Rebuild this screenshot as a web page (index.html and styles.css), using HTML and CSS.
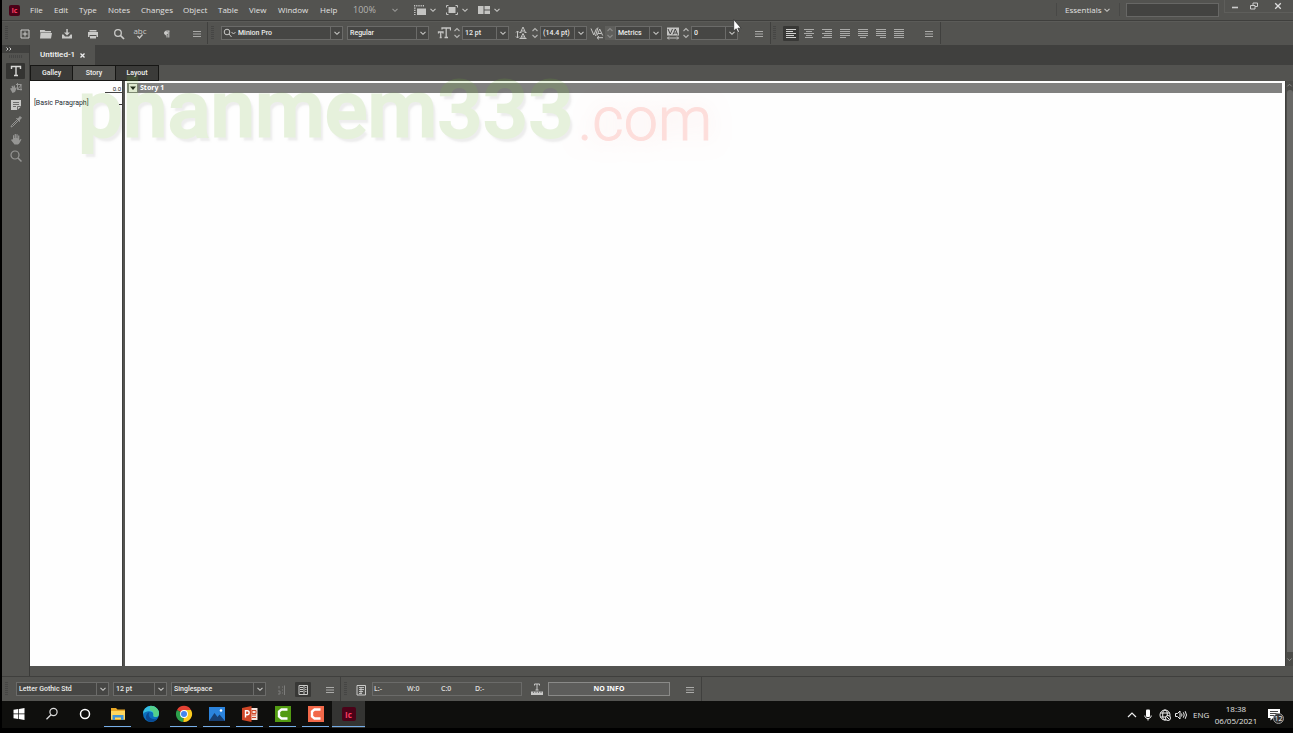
FILE: index.html
```html
<!DOCTYPE html>
<html lang="en">
<head>
<meta charset="utf-8">
<title>Untitled-1 - InCopy</title>
<link rel="stylesheet" href="styles.css">
</head>
<body>
<svg class="defs" width="0" height="0" aria-hidden="true">
  <symbol id="chev" viewBox="0 0 8 8"><path d="M1.5 2.8 4 5.3 6.500 2.800" fill="none" stroke="currentColor" stroke-width="1.1"/></symbol>
  <symbol id="burger" viewBox="0 0 16 16"><path d="M4 5.500h8M4 8h8M4 10.500h8" stroke="currentColor" stroke-width="1.1"/></symbol>
  <symbol id="spin" viewBox="0 0 10 14"><path d="M2.500 5 5 2.500 7.500 5M2.500 9 5 11.500 7.500 9" fill="none" stroke="currentColor" stroke-width="1.1"/></symbol>
  <symbol id="lens" viewBox="0 0 16 16"><circle cx="7" cy="7" r="3.300" fill="none" stroke="currentColor" stroke-width="1.300"/><path d="m9.500 9.500 3.500 3.500" stroke="currentColor" stroke-width="1.700"/></symbol>
</svg>
<div class="app">
  <header class="menubar">
    <span class="applogo">Ic</span>
    <nav class="menus">
      <button>File</button><button>Edit</button><button>Type</button><button>Notes</button><button>Changes</button><button>Object</button><button>Table</button><button>View</button><button>Window</button><button>Help</button>
    </nav>
    <label class="zoom"><select aria-label="Zoom level"><option>100%</option></select><svg class="chev"><use href="#chev"/></svg></label>
    <div class="viewopts">
      <button aria-label="View options"><svg width="12" height="10" viewBox="0 0 12 10"><path d="M3 3.500h9V10H3z" fill="#c4c4c2"/><path d="M0 .8h11M.8 2.500v7.500" stroke="#c4c4c2" stroke-width="1.500" stroke-dasharray="1.200 1"/></svg><svg class="chev"><use href="#chev"/></svg></button>
      <button aria-label="Screen mode"><svg width="12" height="10" viewBox="0 0 12 10"><path d="M2.500 2h7v6h-7z" fill="#c4c4c2"/><path d="M.5 2.500v-2h2M9.500.5h2v2M.5 7.500v2h2M9.500 9.500h2v-2" fill="none" stroke="#c4c4c2"/></svg><svg class="chev"><use href="#chev"/></svg></button>
      <button aria-label="Arrange documents"><svg width="12" height="10" viewBox="0 0 12 10"><path d="M0 1h5.500v8H0zM6.500 1H12v3.500H6.500zM6.500 5.500H12V9H6.500z" fill="#c4c4c2"/></svg><svg class="chev"><use href="#chev"/></svg></button>
    </div>
    <div class="workspace">
      <label class="essentials"><select aria-label="Workspace"><option>Essentials</option></select><svg class="chev"><use href="#chev"/></svg></label>
      <input class="search" type="text" aria-label="Search">
    </div>
    <div class="winbtns">
      <button aria-label="Minimize"><svg width="8" height="8" viewBox="0 0 8 8"><path d="M1 5.500h6" stroke="#ccc" stroke-width="1.600"/></svg></button>
      <button aria-label="Restore"><svg width="8" height="8" viewBox="0 0 8 8"><path d="M3 4V1h4.500v3.500H5M.5 3.500H5v3.500H.5z" fill="none" stroke="#ccc"/></svg></button>
      <button aria-label="Close"><svg width="8" height="8" viewBox="0 0 8 8"><path d="m1.200 1.200 5.600 5.600m0-5.600L1.200 6.800" stroke="#ddd" stroke-width="1.300"/></svg></button>
    </div>
  </header>

  <div class="toolbar">
    <div class="group files">
      <i class="grip"></i>
      <button aria-label="New"><svg><path d="M4 4h8v8H4zM8 5.500v5M5.500 8h5" fill="none" stroke="currentColor"/></svg></button>
      <button aria-label="Open"><svg><path d="M2 4h4.500l1 1H13v1.500H2zM2.500 7H14l-1 5.500H2z" fill="currentColor"/></svg></button>
      <button aria-label="Save"><svg><path d="M7.300 3h1.500v3.500H11L8 9.500 5 6.500h2.300zM3 8.500h1.500l1.500 2h4l1.500-2H13v4H3z" fill="currentColor"/></svg></button>
      <button aria-label="Print"><svg><path d="M4.500 4h7v1.500h-7zM3 6h10v5h-1.500V9h-7v2H3zM5 10h6v2.500H5z" fill="currentColor"/></svg></button>
      <button aria-label="Find"><svg><use href="#lens"/></svg></button>
      <button class="spell" aria-label="Check spelling"><span>abc</span><svg width="8" height="5" viewBox="0 0 8 5"><path d="m1.500 2 2 2L6.500.5" fill="none" stroke="currentColor" stroke-width="1.300"/></svg></button>
      <button aria-label="Hidden characters"><svg><path d="M10.500 5H7.500a2 2 0 0 0 0 4H8v2.500M9.800 5v6.500" fill="none" stroke="currentColor"/><circle cx="7.300" cy="7" r="1.800" fill="currentColor"/></svg></button>
      <button class="dim" aria-label="Panel menu"><svg><use href="#burger"/></svg></button>
    </div>
    <div class="group type">
      <i class="grip"></i>
      <label class="combo withlens"><select aria-label="Font family"><option>Minion Pro</option></select><svg class="lead" width="14" height="10" viewBox="0 0 14 10"><circle cx="4" cy="4" r="2.800" fill="none" stroke="currentColor"/><path d="m6 6 2.500 3M8.500 4l2 2 2-2" fill="none" stroke="currentColor"/></svg><span class="drop"><svg class="chev"><use href="#chev"/></svg></span></label>
      <label class="combo"><select aria-label="Font style"><option>Regular</option></select><span class="drop"><svg class="chev"><use href="#chev"/></svg></span></label>
      <div class="field">
        <svg class="fi" viewBox="0 0 14 14"><path d="M5 3.500V2h8.500v2.500M9.200 2v9.500M7.500 11.500H11M1.500 7.500V6h4.500v1.500M3.700 6v5.500M2.700 11.500h2" fill="none" stroke="currentColor" stroke-width="1.300"/></svg>
        <button class="spin" aria-label="Step size"><svg><use href="#spin"/></svg></button>
        <label class="combo"><select aria-label="Font size"><option>12 pt</option></select><span class="drop"><svg class="chev"><use href="#chev"/></svg></span></label>
      </div>
      <div class="field">
        <svg class="fi" viewBox="0 0 14 14"><path d="M2.500 5v7M1 6.500 2.500 5 4 6.500M1 10.500 2.500 12 4 10.500M5.500 6.500 8 1l2.500 5.500M6.200 5h3.500M4.500 6.500h2M9.500 6.500h2M5.500 12.500 8 7.500l2.500 5M6.200 11h3.500M4.500 12.500h7" fill="none" stroke="currentColor"/></svg>
        <button class="spin" aria-label="Step leading"><svg><use href="#spin"/></svg></button>
        <label class="combo"><select aria-label="Leading"><option>(14.4 pt)</option></select><span class="drop"><svg class="chev"><use href="#chev"/></svg></span></label>
      </div>
      <div class="field">
        <svg class="fi" viewBox="0 0 14 14"><path d="m1 2.500 2.800 6.500L6.500 2.500M7 9.500 9.700 3l3 6.500M8 7.500h3.500M8 1.500 5.500 10M13 11.700H7m2-1.700-2 1.700 2 1.700" fill="none" stroke="currentColor"/></svg>
        <button class="spin off" aria-label="Step kerning"><svg><use href="#spin"/></svg></button>
        <label class="combo"><select aria-label="Kerning"><option>Metrics</option></select><span class="drop"><svg class="chev"><use href="#chev"/></svg></span></label>
      </div>
      <div class="field">
        <svg class="fi" viewBox="0 0 14 14"><path d="M1 1.500h12v8H1z" fill="currentColor"/><path d="M2 3 4.300 8 6.500 3M7 8.500 9.300 3l2.300 5.500M8 7h2.800" fill="none" stroke="#444"/><path d="M1.500 12h11M3 10.500 1.500 12 3 13.500M11 10.500l1.500 1.500-1.500 1.500" fill="none" stroke="currentColor"/></svg>
        <button class="spin" aria-label="Step tracking"><svg><use href="#spin"/></svg></button>
        <label class="combo"><select aria-label="Tracking"><option>0</option></select><span class="drop"><svg class="chev"><use href="#chev"/></svg></span></label>
      </div>
      <button class="dim" aria-label="Panel menu"><svg><use href="#burger"/></svg></button>
    </div>
    <div class="group aligns">
      <i class="grip"></i>
      <button class="on" aria-label="Align left"><svg><path d="M3 3.500h10M3 5.500h7M3 7.500h10M3 9.500h8M3 11.500h10" stroke="currentColor"/></svg></button>
      <button aria-label="Align center"><svg><path d="M3 3.500h10M5 5.500h6M3 7.500h10M5 9.500h6M4 11.500h8" stroke="currentColor"/></svg></button>
      <button aria-label="Align right"><svg><path d="M3 3.500h10M6 5.500h7M3 7.500h10M5 9.500h8M3 11.500h10" stroke="currentColor"/></svg></button>
      <button aria-label="Justify last left"><svg><path d="M3 3.500h10M3 5.500h10M3 7.500h10M3 9.500h10M3 11.500h6" stroke="currentColor"/></svg></button>
      <button aria-label="Justify last center"><svg><path d="M3 3.500h10M3 5.500h10M3 7.500h10M3 9.500h10M5 11.500h6" stroke="currentColor"/></svg></button>
      <button aria-label="Justify last right"><svg><path d="M3 3.500h10M3 5.500h10M3 7.500h10M3 9.500h10M7 11.500h6" stroke="currentColor"/></svg></button>
      <button aria-label="Justify all"><svg><path d="M3 3.500h10M3 5.500h10M3 7.500h10M3 9.500h10M3 11.500h10" stroke="currentColor"/></svg></button>
      <button class="dim" aria-label="Panel menu"><svg><use href="#burger"/></svg></button>
    </div>
  </div>

  <main class="work">
    <aside class="dock">
      <button class="expand" aria-label="Expand panel"><svg width="6" height="4" viewBox="0 0 6 4"><path d="m.5.5 1.500 1.500L.5 3.500M3.500.5 5 2 3.500 3.500" fill="none" stroke="#ccc"/></svg></button>
      <i class="hgrip"></i>
      <div class="tools">
        <button class="on" aria-label="Type tool"><svg><path d="M3.500 6V3.500h9V6M8 3.500v9M6 12.500h4" fill="none" stroke="#d8d8d6" stroke-width="1.400"/></svg></button>
        <button aria-label="Position tool"><svg><path d="M2 8.500 4 8l-.5-2 1.300-.2.700 1.700.2-2h1.300v2.500l1.500-1v1.500L7 12l-2.500 1z" fill="currentColor"/><path d="M9.500 3v6.500H14M8 4.500h5v6M9.500 9.500l4-5" fill="none" stroke="currentColor"/></svg></button>
        <button class="bright" aria-label="Note tool"><svg><path d="M3 3h10v6.500L9.500 13H3z" fill="currentColor"/><path d="M5 5.500h6M5 7.500h6M5 9.500h3M9.500 13V9.500H13" fill="none" stroke="#555" stroke-width=".8"/></svg></button>
        <button aria-label="Eyedropper tool"><svg><path d="m9.500 5.500-6 6L3 13l1.500-.5 6-6" fill="none" stroke="currentColor"/><path d="M8.500 4.500 10 5l2-2.500 1.500 1.500L11.200 6l.3 1.500z" fill="currentColor" stroke="currentColor"/></svg></button>
        <button aria-label="Hand tool"><svg><path d="M5 8.500V4.200h1.200V7h.5V3h1.200v4h.5V3.200h1.200V7.300h.5V4.500h1.200V9.500l1.200-1.500 1 .5-2.300 4-1.200 1H6.500L3 9l1-.8z" fill="currentColor"/></svg></button>
        <button aria-label="Zoom tool"><svg><circle cx="7" cy="7" r="4" fill="none" stroke="currentColor" stroke-width="1.200"/><path d="m10 10 3.500 3.500" stroke="currentColor" stroke-width="1.500"/></svg></button>
      </div>
    </aside>
    <section class="document">
      <div class="doctabs"><div class="doctab"><span>Untitled-1</span><button aria-label="Close document"><svg width="5" height="5" viewBox="0 0 5 5"><path d="m.5.5 4 4m0-4-4 4" stroke="#eee" stroke-width="1.300"/></svg></button></div></div>
      <div class="viewtabs"><button>Galley</button><button class="cur">Story</button><button>Layout</button></div>
      <div class="editor">
        <div class="styles">
          <div class="ruler"><span>0.0</span></div>
          <div class="para"><span>[Basic Paragraph]</span><i></i></div>
        </div>
        <div class="story">
          <div class="storyhead"><button aria-label="Collapse story"><svg width="8" height="8" viewBox="0 0 8 8"><path d="M1 2.500h6L4 6z" fill="#111"/></svg></button><span>Story 1</span></div>
        </div>
        <div class="scroll">
          <svg class="up" viewBox="0 0 8 8"><path d="M1.500 5 4 2.500 6.500 5" fill="none" stroke="#8c8c8a"/></svg>
          <i></i>
          <svg viewBox="0 0 8 8"><use href="#chev"/></svg>
        </div>
      </div>
      <div class="hbar"></div>
    </section>
  </main>

  <footer class="bottombar">
    <div class="group galley">
      <i class="grip"></i>
      <label class="combo"><select aria-label="Display font"><option>Letter Gothic Std</option></select><span class="drop"><svg class="chev"><use href="#chev"/></svg></span></label>
      <label class="combo"><select aria-label="Display size"><option>12 pt</option></select><span class="drop"><svg class="chev"><use href="#chev"/></svg></span></label>
      <label class="combo"><select aria-label="Line spacing"><option>Singlespace</option></select><span class="drop"><svg class="chev"><use href="#chev"/></svg></span></label>
      <button class="faint" aria-label="Line numbers"><svg><path d="M5 4v2.500M4 9h2v3H4M10.500 3.500V13M8 5h1M8 8h1M8 11h1" fill="none" stroke="currentColor"/></svg></button>
      <button class="on" aria-label="Style column"><svg><path d="M4 3.500h8.500v9H4z" fill="none" stroke="currentColor"/><path d="M5 5.500h3M5 7.500h3M5 9.500h3M9 3.500v9" stroke="currentColor"/><path d="M10 5.500h1.500M10 7.500h1.500M10 9.500h1.500" stroke="currentColor" stroke-width=".8"/></svg></button>
      <button class="dim" aria-label="Panel menu"><svg><use href="#burger"/></svg></button>
    </div>
    <div class="group copyfit">
      <i class="grip"></i>
      <button aria-label="Update info"><svg><path d="M4 3.500h8.500v9.500H4z" fill="none" stroke="currentColor"/><path d="M6 5.500h5M6 7.500h5M6 9.500h4M6 11.500h3M8 5v6" stroke="currentColor" stroke-width=".9"/></svg></button>
      <div class="counts"><span>L:-</span><span>W:0</span><span>C:0</span><span>D:-</span></div>
      <svg class="fitico" viewBox="0 0 16 16"><path d="M5.500 4.500v-1.500h5v1.500M8 3v6M6.500 9h3" fill="none" stroke="currentColor"/><path d="M2 10.500h12V14H2z" fill="currentColor"/><path d="M4.500 10.500V12M7 10.500V12M9.500 10.500V12M12 10.500V12" stroke="#555" stroke-width=".7"/></svg>
      <div class="noinfo">NO INFO</div>
      <button class="dim" aria-label="Panel menu"><svg><use href="#burger"/></svg></button>
    </div>
  </footer>

  <div class="taskbar">
    <div class="apps">
      <button aria-label="Start"><svg viewBox="0 0 20 20"><path d="M4.500 5.800 9.300 5v4.600H4.500zM10 4.900l5.500-.9v5.600H10zM4.500 10.300h4.800V15l-4.800-.8zM10 10.300h5.500V16l-5.500-.9z" fill="#fff"/></svg></button>
      <button aria-label="Search"><svg viewBox="0 0 20 20"><circle cx="11.500" cy="8" r="3.600" fill="none" stroke="#ddd" stroke-width="1.200"/><path d="M9 10.700 4.500 15.300" stroke="#ddd" stroke-width="1.300"/></svg></button>
      <button aria-label="Cortana"><svg viewBox="0 0 20 20"><circle cx="10" cy="10" r="4.500" fill="none" stroke="#fff" stroke-width="1.500"/></svg></button>
      <button class="run" aria-label="File Explorer"><svg viewBox="0 0 20 20"><path d="M3 4h5l1.500 1.500H17V16H3z" fill="#e9a825"/><path d="M3 7h14v8H3z" fill="#ffd75e"/><path d="M4.500 16v-5h11v5H13v-2.500H7V16z" fill="#3f95d8"/></svg></button>
      <button aria-label="Edge"><svg viewBox="0 0 20 20"><circle cx="10" cy="10" r="8" fill="#0c6fbd"/><path d="M2 10a8 8 0 0 1 16-.5c0 3-2.500 3.800-4.500 3.300-1.500-.4-1-1.300-1-2.600C12.500 7 5 5.500 2 10z" fill="#35bfe2"/><path d="M9 2.100c5-.6 9 3 9 7.400 0 3-2.500 3.800-4.500 3.300-1.500-.4-1-1.300-1-2.600 0-3-2-3.500-3.500-4z" fill="#55d08a"/><path d="M8.500 8c-2 3 0 7.500 6 7.200l2.500-1.500c-3 4.600-8 5-10.500 2.800C3.500 14 5 9.500 8.500 8z" fill="#0a4a94"/></svg></button>
      <button class="run" aria-label="Chrome"><svg viewBox="0 0 20 20"><path d="M10 10 3 6a8 8 0 0 1 14 0z" fill="#e34133"/><path d="M10 10 3 6a8 8 0 0 0 6.300 12z" fill="#2c9f4b"/><path d="M10 10 9.300 18A8 8 0 0 0 17 6h-7z" fill="#fccb1e"/><circle cx="10" cy="10" r="3.900" fill="#fff"/><circle cx="10" cy="10" r="3" fill="#4585ee"/></svg></button>
      <button class="run" aria-label="Photos"><svg viewBox="0 0 20 20"><path d="M2 3h16v14H2z" fill="#2b83dc"/><path d="m2 17 5.500-8 3 4 2-2.500L18 17z" fill="#173f73"/><circle cx="14" cy="6.500" r="1.300" fill="#fff"/></svg></button>
      <button class="run" aria-label="PowerPoint"><svg viewBox="0 0 20 20"><path d="M10 4h7.500v12H10z" fill="#f5e5df"/><path d="M12 6.500h4v3h-4zM12 11h4M12 13.500h4" fill="none" stroke="#d04727"/><path d="m2 4 9.500-2v16L2 16z" fill="#d04727"/><path d="M5.500 13.500V6.800h1.700a1.900 1.900 0 0 1 0 3.900H5.500" fill="none" stroke="#fff" stroke-width="1.400"/></svg></button>
      <button class="run" aria-label="Camtasia"><svg viewBox="0 0 20 20"><path d="M2 2h16v16H2z" fill="#529b12"/><path d="M14.500 5.500h-6L6 7.500v5l2.500 2h6" fill="none" stroke="#fff" stroke-width="2.400"/></svg></button>
      <button class="run" aria-label="Camtasia Recorder"><svg viewBox="0 0 20 20"><path d="M2 2h16v16H2z" fill="#f2694a"/><path d="M14.500 5.500h-6L6 7.500v5l2.500 2h6" fill="none" stroke="#fff" stroke-width="2.400"/></svg></button>
      <button class="run active" aria-label="InCopy"><span class="applogo">Ic</span></button>
    </div>
    <div class="tray">
      <button aria-label="Show hidden icons"><svg viewBox="0 0 16 16"><path d="m4 10 4-4 4 4" fill="none" stroke="#eee" stroke-width="1.200"/></svg></button>
      <button aria-label="Microphone"><svg viewBox="0 0 16 16"><rect x="6" y="2.500" width="4" height="7.500" rx="1" fill="#fff"/><path d="M4.800 8.500c0 4 6.400 4 6.400 0M8 11.500v2" fill="none" stroke="#fff"/></svg></button>
      <button aria-label="Network"><svg viewBox="0 0 16 16"><circle cx="8" cy="8" r="5" fill="none" stroke="#eee"/><ellipse cx="8" cy="8" rx="2.300" ry="5" fill="none" stroke="#eee"/><path d="M3.500 6h9M3.500 10h9" stroke="#eee"/><circle cx="11" cy="11" r="2.500" fill="#111" stroke="#eee"/><path d="m9.500 9.500 3 3" stroke="#eee"/></svg></button>
      <button aria-label="Volume"><svg viewBox="0 0 16 16"><path d="M2.500 6.500h2L7 4v8L4.500 9.500h-2zM8.500 6.500q1 1.500 0 3M10.300 5.300q1.900 2.700 0 5.400M12.200 4.200q2.600 3.800 0 7.600" fill="none" stroke="#eee"/></svg></button>
      <span class="lang">ENG</span>
      <div class="clock"><span>18:38</span><span>06/05/2021</span></div>
      <button class="notes" aria-label="Notifications"><svg viewBox="0 0 16 16"><path d="M2 2h12v9H7l-2.500 2.500V11H2z" fill="#fff"/><path d="M4 4.500h8M4 6.500h8M4 8.500h5" stroke="#333" stroke-width=".9"/></svg><span class="badge">12</span></button>
    </div>
  </div>
  <div class="edge"></div>

  <div class="watermark" aria-hidden="true"><span class="name">phanmem333</span><span class="com">.com</span></div>
  <svg class="cursor" viewBox="0 0 8 13"><path d="M.5.500v10.500l2.300-2 1.500 3.500 1.500-.7-1.500-3.300h3z" fill="#fff" stroke="#222" stroke-width=".6"/></svg>
</div>
</body>
</html>
```
FILE: styles.css
```css
* { box-sizing: border-box; }
html, body { margin: 0; height: 100%; background: #000; }
body { font-family: "Open Sans", "Noto Sans", sans-serif; font-size: 8px; line-height: 12px; color: #e2e2e0; }
button, select, input { font: inherit; color: inherit; margin: 0; padding: 0; border: 0; background: none; border-radius: 0; }
select { appearance: none; min-width: 0; outline: 0; }
svg { display: block; }
.defs { position: absolute; }
.chev { width: 8px; height: 8px; color: #c8c8c6; }

.app { position: relative; display: flex; flex-direction: column; height: 100vh; overflow: hidden; padding-left: 2px; }

.menubar { display: flex; height: 21px; background: #535350; border-bottom: 1px solid #3f3f3d; }
.applogo { display: grid; place-items: center; width: 11px; height: 11px; margin: 5px 10px 0 7px; border-radius: 2px; background: #4b0218; color: #fb3b62; font-size: 7px; line-height: 9px; font-weight: 700; }
.menus { display: grid; grid-template-columns: 24px 25px 29px 33px 42px 35px 31px 29px 42px 33px; }
.menus button { text-align: left; white-space: nowrap; }
.zoom { display: grid; grid-template-columns: 38px 8px; align-items: center; color: #b4b4b2; }
.zoom select { font-size: 9px; }
.zoom .chev { color: #9a9a98; }
.viewopts { display: grid; grid-template-columns: repeat(3, 32px); margin-left: 15px; }
.viewopts button { display: flex; align-items: center; gap: 3px; }
.workspace { display: flex; align-items: flex-start; margin-left: auto; }
.essentials { display: grid; grid-template-columns: 38px 16px; align-items: center; height: 13px; margin-top: 3px; padding-left: 8px; border: solid #484846; border-width: 0 1px; }
.search { width: 93px; height: 14px; margin: 3px 5px 0 6px; background: #434341; border: 1px solid #676765; }
.winbtns { display: grid; grid-template-columns: 19px 19px 30px; height: 13px; border: solid #5e5e5b; border-width: 0 0 1px 1px; }
.winbtns button { display: grid; place-items: center; }

.toolbar, .bottombar { display: flex; background: #535350; }
.toolbar { height: 24px; padding-bottom: 1px; border-top: 1px solid #5b5b58; }
.group { display: grid; align-items: center; border-right: 1px solid #40403e; }
.group > button { display: grid; place-items: center; width: 16px; height: 15px; color: #cacac8; }
.group > button > svg, .tools svg { width: 16px; height: 16px; }
.group > .dim { color: #aaaaa8; }
.group > .on { background: #383836; border-radius: 1px; }
.group > .faint { color: #7c7c7a; }
.grip { width: 3px; height: 14px; background: repeating-linear-gradient(#464644 0 1px, #525250 1px 2px); }
.files { grid-template-columns: 12px 21px 21px 26px 26px 21px 27px 30px 16px; padding: 0 2px 0 3px; }
.type { grid-template-columns: 10px 126px 90px 78px 75px 76px 85px 16px; padding: 0 3px 0 3px; }
.type > .combo + .combo { margin-right: 8px; }
.aligns { grid-template-columns: 10px repeat(7, 18px) 12px 16px; padding: 0 3px 0 2px; }
.aligns .dim { grid-column: 10; }
.aligns > button { color: #aaaaa8; }
.aligns > .on { color: #d0d0ce; }
.group > .spell { align-content: center; font-size: 8px; line-height: 7px; }
.group > .spell svg { width: 8px; height: 5px; }

.combo { display: grid; grid-template-columns: 1fr 12px; height: 14px; margin-right: 4px; background: #464644; border: 1px solid #6b6b69; font-family: Roboto, sans-serif; font-size: 7px; font-weight: 500; line-height: 12px; color: #ececea; }
.combo select { grid-area: 1 / 1 / 2 / 3; padding-left: 2px; }
.combo .drop { grid-area: 1 / 2; display: grid; place-items: center; border-left: 1px solid #6b6b69; pointer-events: none; }
.combo.withlens select { padding-left: 16px; }
.withlens .lead { grid-area: 1 / 1; align-self: center; margin-left: 1px; pointer-events: none; color: #c8c8c6; }
.field { display: grid; grid-template-columns: 15px 10px 47px; align-items: center; }
.field .combo { margin: 0; }
.fi { width: 14px; height: 14px; color: #c4c4c2; }
.spin svg { width: 10px; height: 14px; }
.spin { color: #b4b4b2; }
.spin.off { color: #8a8a88; background: #5f5f5c; }

.work { display: flex; flex: 1; min-height: 0; background: #535350; }
.dock { display: flex; flex-direction: column; align-items: center; width: 28px; border-right: 1px solid #3b3b39; }
.expand { align-self: stretch; height: 8px; padding-left: 4px; background: #40403e; }
.hgrip { width: 14px; height: 3px; margin: 2px 0 5px; background: repeating-linear-gradient(90deg, #464644 0 1px, #525250 1px 2px); }
.tools { display: grid; gap: 1px; color: #969694; }
.tools button { display: grid; place-items: center; width: 19px; height: 16px; }
.tools .on { background: #343432; border-radius: 1px; }
.tools .bright { color: #c8c8c6; }

.document { display: flex; flex-direction: column; flex: 1; min-width: 0; }
.doctabs { display: flex; height: 20px; background: #40403e; }
.doctab { display: flex; align-items: center; gap: 5px; padding: 0 10px; background: #535350; font-family: Roboto, sans-serif; font-weight: 500; color: #f4f4f2; }
.viewtabs { display: flex; height: 16px; }
.viewtabs button { min-width: 43px; padding: 0 10px; background: #3b3b39; border: 1px solid #161614; border-left-width: 0; font-family: Roboto, sans-serif; font-size: 7px; font-weight: 500; color: #f0f0ee; }
.viewtabs button:first-child { border-left-width: 1px; }
.viewtabs .cur { background: #535350; }
.editor { display: grid; grid-template-columns: 93px 1fr 8px; flex: 1; color: #222; }
.styles { background: #fefefe; border-right: 1px solid #3f3f3d; font-family: Roboto, sans-serif; font-size: 7px; }
.ruler { height: 12px; margin-left: 75px; padding: 3px 1px 0 0; border-bottom: 1px solid #444; text-align: right; font-size: 6px; line-height: 9px; }
.para { display: flex; align-items: center; justify-content: space-between; height: 20px; padding-left: 4px; }
.para span { color: #1c2a32; white-space: nowrap; }
.para i { width: 3px; height: 1px; margin-top: 2px; background: #333; }
.story { background: #fefefe; border-left: 2px solid #535350; padding: 2px 3px 0 2px; }
.storyhead { display: flex; align-items: center; gap: 3px; height: 10px; padding-left: 2px; background: #80807f; color: #fff; font-family: "Noto Sans", sans-serif; font-size: 7px; font-weight: 700; }
.storyhead button { width: 8px; height: 8px; background: #f4f4ee; }
.scroll { display: grid; grid-template-rows: 9px 1fr 14px; background: #4b4b48; color: #8c8c8a; border-left: 1px solid #3f3f3d; align-items: center; }
.scroll i { align-self: stretch; margin: 0 0 0 1px; background: #686866; border-radius: 3px 3px 0 0; }
.scroll svg { width: 7px; height: 7px; }
.hbar { height: 10px; }

.bottombar { height: 25px; border-top: 1px solid #3f3f3d; }
.galley { grid-template-columns: 11px 97px 58px 103px 21px 27px 16px; padding: 0 2px 0 3px; }
.galley .combo:nth-of-type(3) { margin-right: 8px; }
.copyfit { grid-template-columns: 9px 19px 157px 19px 134px 16px; padding: 0 3px 0 3px; }
.counts { display: grid; grid-template-columns: 33px 34px 34px 1fr; width: 150px; height: 14px; padding-left: 1px; border: 1px solid #6b6b69; font-family: "Noto Sans", sans-serif; font-size: 7px; line-height: 12px; font-weight: 500; }
.fitico { width: 16px; height: 16px; color: #c8c8c6; }
.noinfo { width: 122px; height: 14px; border: 1px solid #8a8a88; background: #5d5d5b; text-align: center; font-family: "Noto Sans", sans-serif; font-size: 7px; line-height: 12px; font-weight: 700; color: #fff; }

.taskbar { display: flex; justify-content: space-between; height: 27px; background: #0f0f0d; }
.apps { display: grid; grid-template-columns: repeat(11, 33px); }
.apps button { display: grid; place-items: center; border-bottom: 1px solid transparent; }
.apps svg { width: 20px; height: 20px; }
.apps .run { background: linear-gradient(#76aee8, #76aee8) bottom / 27px 1px no-repeat; }
.apps .run.active { background: linear-gradient(#76aee8, #76aee8) bottom / 100% 1px no-repeat, #343432; }
.apps .applogo { width: 14px; height: 14px; margin: 0; font-size: 8px; }
.tray { display: grid; grid-template-columns: 16px 17px 16px 18px 22px 46px 30px; align-items: center; padding-right: 4px; }
.tray button svg { width: 16px; height: 16px; }
.lang { padding-left: 2px; }
.clock { display: grid; text-align: center; }
.notes { display: grid; justify-items: center; position: relative; }
.badge { position: absolute; left: 14px; top: 6px; width: 11px; height: 11px; border: 1px solid #999; border-radius: 50%; background: #333; color: #fff; font-size: 7px; line-height: 9px; text-align: center; }
.edge { height: 5px; background: #000; }

.watermark { position: absolute; left: 78px; top: 63px; display: flex; align-items: flex-start; font-family: Roboto, sans-serif; line-height: 94px; pointer-events: none; opacity: .17; }
.name { font-size: 80px; font-weight: 500; color: #78b83c; -webkit-text-stroke: 2px #78b83c; text-shadow: 3px 4px 2px rgba(90, 90, 90, .6); }
.com { margin: 9px 0 0 4px; font-size: 61px; font-weight: 300; color: #fa4638; -webkit-text-stroke: 1px #fa4638; text-shadow: 0 0 20px rgba(250, 70, 60, .7); }
.cursor { position: absolute; left: 733px; top: 19px; width: 9px; height: 14px; }
```
